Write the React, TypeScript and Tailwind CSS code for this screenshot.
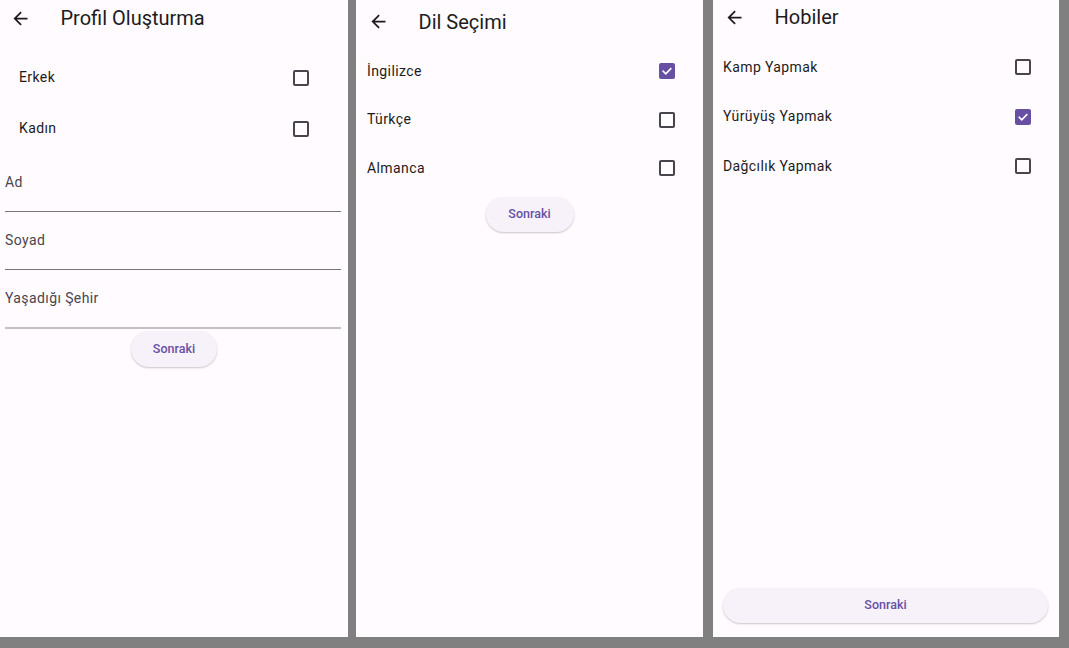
import React from "react";

const font = { fontFamily: "Roboto, 'Noto Sans', sans-serif" };

function BackArrow() {
  return (
    <svg width="21" height="21" viewBox="0 0 24 24" fill="#1d1b20">
      <path d="M20 11H7.83l5.59-5.59L12 4l-8 8 8 8 1.41-1.41L7.83 13H20v-2z" />
    </svg>
  );
}

function Check({ checked }: { checked?: boolean }) {
  if (checked) {
    return (
      <div className="w-[16px] h-[16px] rounded-[2px] bg-[#6750a4] flex items-center justify-center">
        <svg width="12" height="12" viewBox="0 0 24 24" fill="none" stroke="#ffffff" strokeWidth="3.2" strokeLinecap="square">
          <path d="M4.5 12.5l5 5 10-10" />
        </svg>
      </div>
    );
  }
  return <div className="w-[16px] h-[16px] rounded-[2px] border-2 border-[#49454f]" />;
}

function Header({ title, h, left }: { title: string; h: string; left: string }) {
  return (
    <div className={`flex items-center ${h} ${left}`}>
      <BackArrow />
      <span className="ml-[30px] text-[20px] text-[#1d1b20] leading-none">{title}</span>
    </div>
  );
}

function Tile({ label, checked, cls }: { label: string; checked?: boolean; cls: string }) {
  return (
    <div className={`flex items-center justify-between ${cls}`}>
      <span className="text-[14px] tracking-[0.4px] text-[#1d1b20]">{label}</span>
      <Check checked={checked} />
    </div>
  );
}

function Field({ label, line }: { label: string; line: string }) {
  return (
    <div className={`h-[58px] ml-[5px] mr-[7px] border-b ${line} flex flex-col`}>
      <div className="h-[56px] flex items-center">
        <span className="text-[14px] tracking-[0.4px] text-[#49454f]">{label}</span>
      </div>
    </div>
  );
}

function Btn({ cls }: { cls: string }) {
  return (
    <div
      className={`flex items-center justify-center rounded-full bg-[#f7f2fa] shadow-[0_1px_2px_rgba(0,0,0,0.22)] text-[12.5px] font-medium text-[#6750a4] ${cls}`}
    >
      Sonraki
    </div>
  );
}

export default function App() {
  return (
    <div className="w-[1069px] h-[648px] bg-[#808080] flex items-start" style={font}>
      <div className="w-[348px] h-[637px] bg-[#fffbfe] flex flex-col">
        <Header title="Profil Oluşturma" h="h-[36px]" left="pl-[9.5px]" />
        <div className="mt-[16px]">
          <Tile label="Erkek" cls="h-[51px] pl-[19px] pr-[39px]" />
          <Tile label="Kadın" cls="h-[51px] pl-[19px] pr-[39px]" />
        </div>
        <Field label="Ad" line="border-[#79747e]" />
        <Field label="Soyad" line="border-[#79747e]" />
        <Field label="Yaşadığı Şehir" line="border-[#c4c0c8] border-b-2 h-[59px]" />
        <Btn cls="mt-[2px] mx-auto w-[86px] h-[36px]" />
      </div>
      <div className="w-[347px] h-[637px] ml-[8px] bg-[#fffbfe] flex flex-col">
        <Header title="Dil Seçimi" h="h-[43px]" left="pl-[11.5px]" />
        <div className="mt-[3.75px]">
          <Tile label="İngilizce" checked cls="h-[48.5px] pl-[11px] pr-[28px]" />
          <Tile label="Türkçe" cls="h-[48.5px] pl-[11px] pr-[28px]" />
          <Tile label="Almanca" cls="h-[48.5px] pl-[11px] pr-[28px]" />
        </div>
        <Btn cls="mt-[5px] mx-auto w-[88px] h-[35px]" />
      </div>
      <div className="w-[346px] h-[637px] ml-[10px] bg-[#fffbfe] flex flex-col">
        <Header title="Hobiler" h="h-[34px]" left="pl-[10.5px]" />
        <div className="mt-[8.25px]">
          <Tile label="Kamp Yapmak" cls="h-[49.5px] pl-[10px] pr-[28px]" />
          <Tile label="Yürüyüş Yapmak" checked cls="h-[49.5px] pl-[10px] pr-[28px]" />
          <Tile label="Dağcılık Yapmak" cls="h-[49.5px] pl-[10px] pr-[28px]" />
        </div>
        <Btn cls="mt-auto mb-[14px] ml-[10px] mr-[11px] h-[35px]" />
      </div>
    </div>
  );
}
